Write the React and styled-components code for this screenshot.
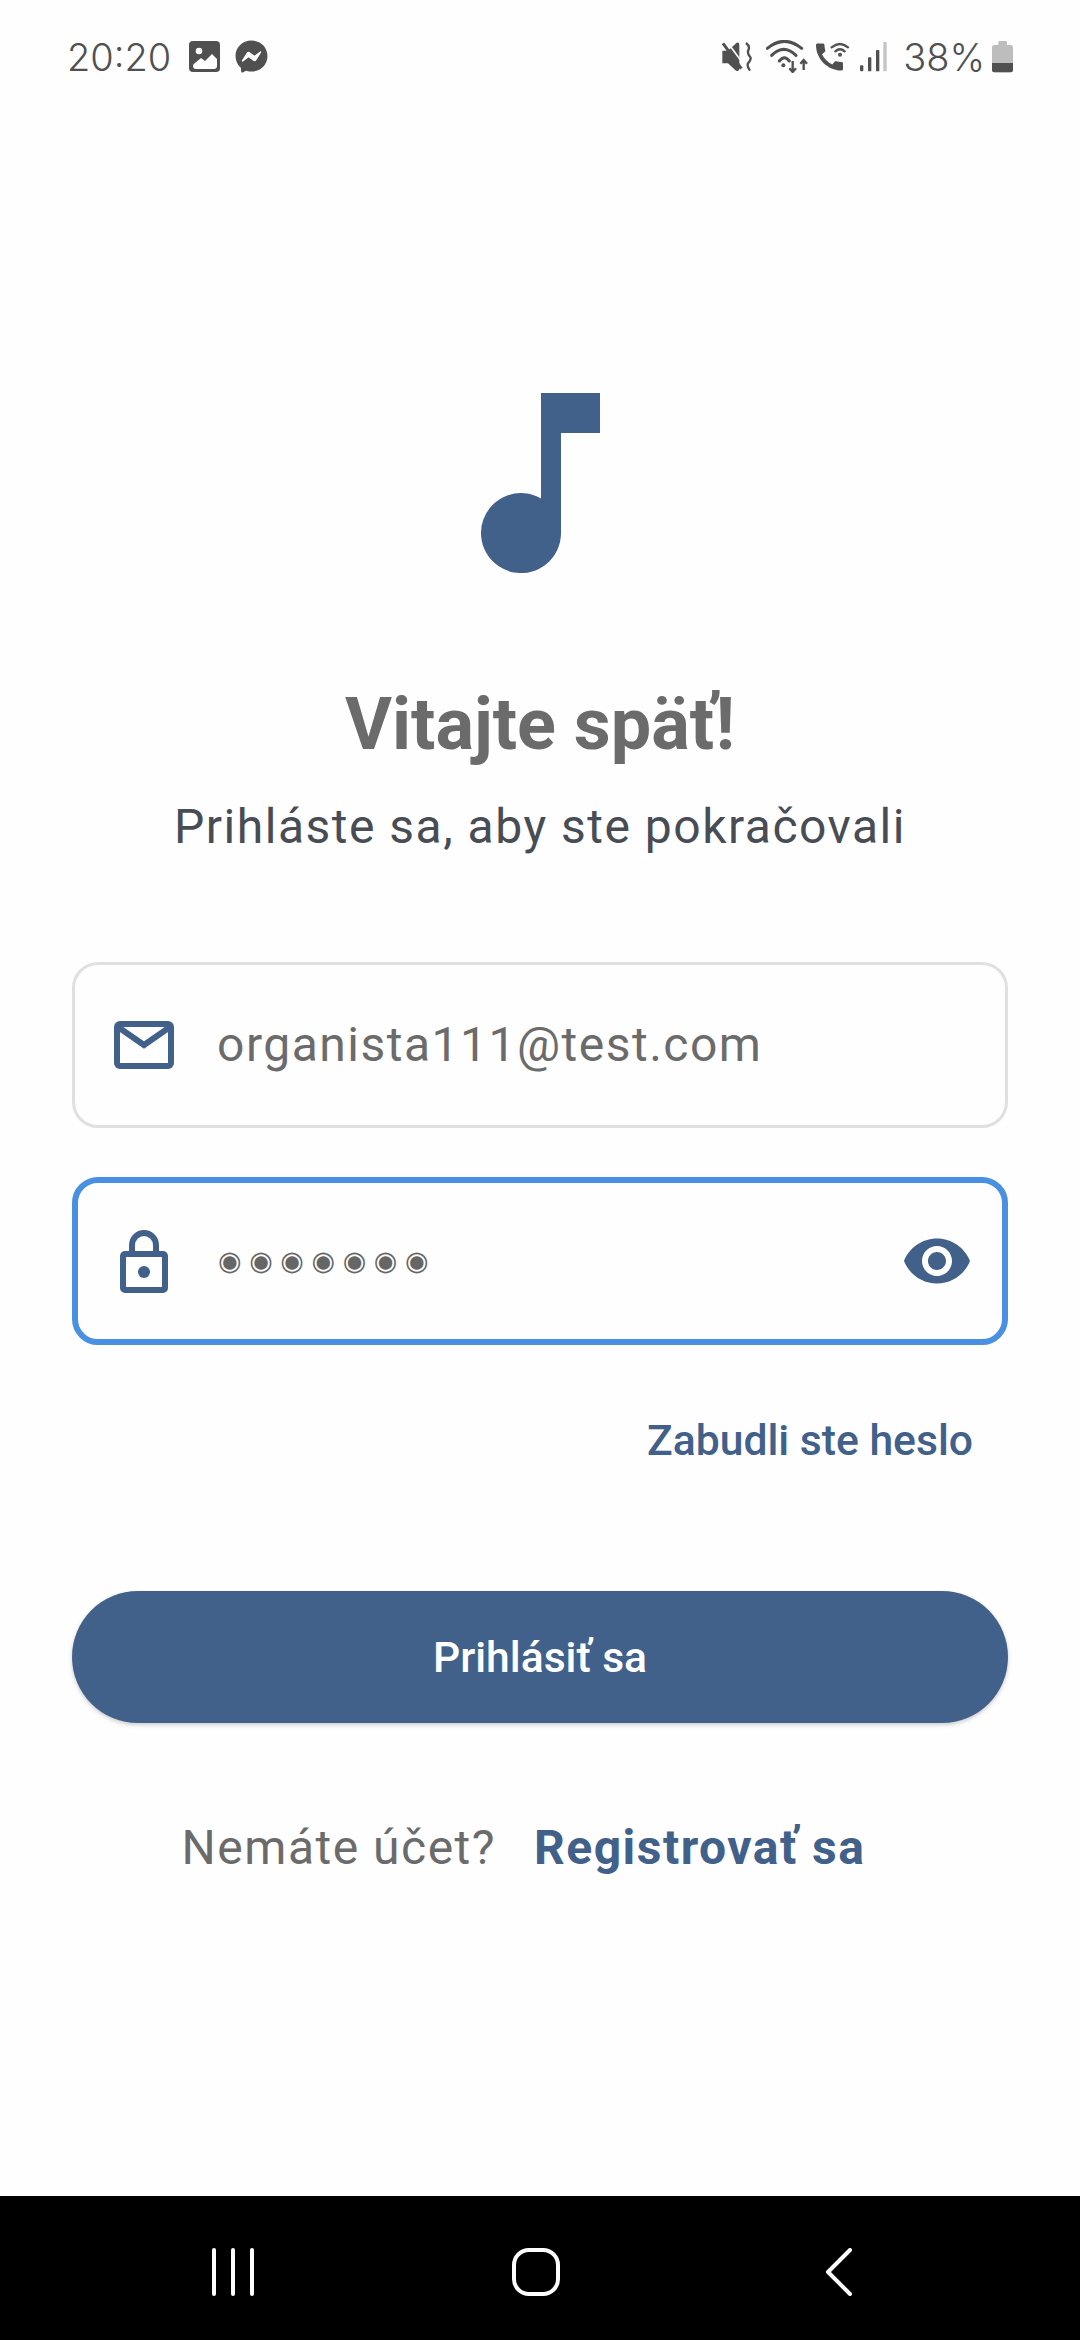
import React from 'react';
import styled, { createGlobalStyle } from 'styled-components';
import { FaFacebookMessenger } from 'react-icons/fa';

const GlobalStyle = createGlobalStyle`
    html, body {
        margin: 0;
        padding: 0;
        background: #fefefe;
    }
    * {
        box-sizing: border-box;
    }
`

const Page = styled.div`
    width: 1080px;
    height: 2340px;
    display: flex;
    flex-direction: column;
    background: #fefefe;
    font-family: Roboto, "Liberation Sans", sans-serif;
    overflow: hidden;
`

const StatusBar = styled.div`
    height: 113px;
    padding: 0 67px 0 67px;
    display: flex;
    align-items: center;
    color: #505050;
    font-family: Inter, Roboto, sans-serif;
    font-weight: 300;
`
const StatusText = styled.span`
    font-size: 38px;
    line-height: 40px;
    margin-left: ${(p) => p.$gap || 0}px;
`
const Spacer = styled.div`
    flex: 1;
`
const StatusIcon = styled.svg`
    display: block;
    flex: none;
    margin-left: ${(p) => p.$gap || 0}px;
`
const MessengerIcon = styled(FaFacebookMessenger)`
    display: block;
    flex: none;
    margin-left: 15px;
    font-size: 33px;
    color: #505050;
`

const Content = styled.main`
    flex: 1;
    padding: 280px 72px 0;
    display: flex;
    flex-direction: column;
    align-items: stretch;
`
const Logo = styled.svg`
    display: block;
    align-self: center;
    margin-left: 2px;
`
const Title = styled.h1`
    margin: 110px 0 0;
    text-align: center;
    font-size: 72px;
    line-height: 84px;
    font-weight: 700;
    color: #6b6b6b;
`
const Subtitle = styled.p`
    margin: 30px 0 0;
    text-align: center;
    font-size: 48px;
    line-height: 60px;
    font-weight: 400;
    letter-spacing: 1.5px;
    color: #474c55;
`
const Field = styled.div`
    height: ${(p) => (p.$focused ? 168 : 166)}px;
    margin-top: ${(p) => p.$top}px;
    padding: 0 ${(p) => (p.$focused ? 29 : 36)}px 0 ${(p) => (p.$focused ? 42 : 39)}px;
    display: flex;
    align-items: center;
    border: ${(p) => (p.$focused ? '6px solid #4a90e2' : '3px solid #e0e0e0')};
    border-radius: 26px;
    background: #fefefe;
`
const FieldIcon = styled.svg`
    display: block;
    flex: none;
    color: #41608a;
`
const FieldValue = styled.span`
    margin-left: ${(p) => p.$gap}px;
    font-size: 48px;
    line-height: 60px;
    letter-spacing: 1.5px;
    color: #6b6b6b;
`
const Dots = styled.span`
    flex: 1;
    margin-left: ${(p) => p.$gap}px;
    font-family: "DejaVu Sans", sans-serif;
    font-size: 27px;
    line-height: 58px;
    letter-spacing: 7.6px;
    color: #666;
`
const ForgotLink = styled.a`
    align-self: flex-end;
    margin: 70px 35px 0 0;
    font-size: 42.67px;
    line-height: 50px;
    font-weight: 500;
    color: #41608a;
`
const LoginButton = styled.button`
    display: block;
    height: 132px;
    margin-top: 126px;
    border: 0;
    border-radius: 66px;
    background: #41608a;
    box-shadow: 0 2px 4px rgba(0, 0, 0, 0.2);
    font-family: inherit;
    font-size: 42.67px;
    font-weight: 500;
    color: #fff;
`
const Footer = styled.div`
    margin-top: 95px;
    padding-right: 33px;
    display: flex;
    justify-content: center;
    align-items: center;
    gap: 38px;
    line-height: 60px;
`
const FooterText = styled.span`
    font-size: 48px;
    letter-spacing: 1.5px;
    color: #6b6b6b;
`
const FooterLink = styled.a`
    font-size: 48px;
    font-weight: 700;
    letter-spacing: 1.5px;
    color: #41608a;
`

const NavBar = styled.nav`
    height: 144px;
    padding: 8px 8px 0 0;
    background: #000;
    display: grid;
    grid-template-columns: repeat(3, 303px);
    justify-content: center;
    justify-items: center;
    align-items: center;
`
const NavIcon = styled.svg`
    display: block;
    fill: none;
    stroke: #fff;
    stroke-width: 4;
    stroke-linecap: round;
    stroke-linejoin: round;
`

function PhotoIcon() {
    return (
        <StatusIcon $gap={18} width="31" height="31" viewBox="0 0 31 31">
            <rect width="31" height="31" rx="4" fill="#505050" />
            <circle cx="10" cy="10" r="3.3" fill="#fff" />
            <path d="M4 25 Q4 23 6 22 L12 17 L16 20 L23 13 L28 18 V25 Q28 28 25 28 H7 Q4 28 4 25 Z" fill="#fff" />
        </StatusIcon>
    );
}

function MuteIcon() {
    return (
        <StatusIcon width="30" height="30" viewBox="0 0 90 90">
            <path d="M1 26 H18 L44 2 Q52 0 52 8 V82 Q50 90 42 86 L18 64 H1 Z" fill="#505050" />
            <path d="M14 -2 L66 68" stroke="#fefefe" strokeWidth="5" />
            <path d="M3 4 L58 80" stroke="#505050" strokeWidth="9" />
            <path d="M72 3 Q84 12 80 22 Q74 32 84 44 Q90 52 78 64 Q74 72 84 86" stroke="#505050" strokeWidth="7" fill="none" />
        </StatusIcon>
    );
}

function WifiIcon() {
    return (
        <StatusIcon $gap={14} width="45" height="33" viewBox="0 0 135 99">
            <g fill="none" stroke="#505050" strokeWidth="9" strokeLinecap="round">
                <path d="M4 25 Q55 -17 107 25" />
                <path d="M17 46 Q53 10 90 46" />
                <path d="M40 63 Q55 43 70 63" />
            </g>
            <circle cx="52" cy="76" r="6" fill="#505050" />
            <g fill="none" stroke="#505050" strokeWidth="7">
                <path d="M80 63 V96 M70 85 L80 96 L90 85" />
                <path d="M113 90 V60 M103 71 L113 60 L123 71" />
            </g>
        </StatusIcon>
    );
}

function CallWifiIcon() {
    return (
        <StatusIcon $gap={5} width="34" height="33" viewBox="0 0 102 99">
            <g transform="translate(-13.5 -3) scale(4.5)">
                <path
                    fill="#505050"
                    d="M20.01 15.38c-1.23 0-2.42-.2-3.53-.56-.35-.12-.74-.03-1.01.24l-1.57 1.97c-2.83-1.35-5.48-3.9-6.89-6.83l1.95-1.66c.27-.28.35-.67.24-1.02-.37-1.11-.56-2.3-.56-3.53 0-.54-.45-.99-.99-.99H4.19C3.65 3 3 3.24 3 3.99 3 13.28 10.73 21 20.01 21c.71 0 .99-.63.99-1.18v-3.45c0-.54-.45-.99-.99-.99z"
                />
            </g>
            <g fill="none" stroke="#505050" strokeWidth="7" strokeLinecap="round">
                <path d="M47 22 Q72 2 96 22" />
                <path d="M58 34 Q72 22 86 34" />
            </g>
            <circle cx="72" cy="44" r="6" fill="#505050" />
        </StatusIcon>
    );
}

function SignalIcon() {
    return (
        <StatusIcon $gap={10} width="27" height="30" viewBox="0 0 81 90">
            <rect x="0" y="70" width="10" height="18" rx="3" fill="#505050" />
            <rect x="24" y="46" width="10" height="42" rx="2" fill="#505050" />
            <rect x="48" y="24" width="10" height="64" rx="2" fill="#505050" />
            <rect x="70" y="0" width="10" height="88" rx="2" fill="#c4c4c4" />
        </StatusIcon>
    );
}

function BatteryIcon() {
    return (
        <StatusIcon $gap={7} width="21" height="32" viewBox="0 0 63 96">
            <rect x="19" y="0" width="26" height="20" rx="4" fill="#bdbdbd" />
            <rect x="0" y="12" width="63" height="82" rx="7" fill="#bdbdbd" />
            <path d="M0 66 H63 V87 Q63 94 56 94 H7 Q0 94 0 87 Z" fill="#505050" />
        </StatusIcon>
    );
}

function App() {
    return (
        <Page>
            <GlobalStyle />
            <StatusBar>
                <StatusText>20:20</StatusText>
                <PhotoIcon />
                <MessengerIcon />
                <Spacer />
                <MuteIcon />
                <WifiIcon />
                <CallWifiIcon />
                <SignalIcon />
                <StatusText $gap={16}>38%</StatusText>
                <BatteryIcon />
            </StatusBar>

            <Content>
                <Logo width="120" height="180" viewBox="0 0 120 180">
                    <path
                        fill="#41608a"
                        d="M60 0 H119 V40 H80 V140 A40 40 0 1 1 60 105.4 Z"
                    />
                </Logo>
                <Title>Vitajte späť!</Title>
                <Subtitle>Prihláste sa, aby ste pokračovali</Subtitle>

                <Field $top={105}>
                    <FieldIcon width="60" height="48" viewBox="0 0 60 48" fill="none" stroke="currentColor" strokeWidth="6">
                        <rect x="3" y="3" width="54" height="42" rx="3" />
                        <path d="M4 6 L30 24 L56 6" />
                    </FieldIcon>
                    <FieldValue $gap={43}>organista111@test.com</FieldValue>
                </Field>

                <Field $focused $top={49}>
                    <FieldIcon width="48" height="63" viewBox="0 0 48 63">
                        <path fill="none" stroke="currentColor" strokeWidth="6" d="M12 22 V15 A12 12 0 0 1 36 15 V22" />
                        <rect x="3" y="24" width="42" height="36" rx="2" fill="none" stroke="currentColor" strokeWidth="6" />
                        <circle cx="24" cy="42" r="6" fill="currentColor" />
                    </FieldIcon>
                    <Dots $gap={50}>◉◉◉◉◉◉◉</Dots>
                    <FieldIcon width="72" height="72" viewBox="0 0 24 24">
                        <path
                            fill="currentColor"
                            d="M12 4.5C7 4.5 2.73 7.61 1 12c1.73 4.39 6 7.5 11 7.5s9.27-3.11 11-7.5c-1.73-4.39-6-7.5-11-7.5zM12 17c-2.76 0-5-2.24-5-5s2.24-5 5-5 5 2.24 5 5-2.24 5-5 5zm0-8c-1.66 0-3 1.34-3 3s1.34 3 3 3 3-1.34 3-3-1.34-3-3-3z"
                        />
                    </FieldIcon>
                </Field>

                <ForgotLink>Zabudli ste heslo</ForgotLink>
                <LoginButton>Prihlásiť sa</LoginButton>

                <Footer>
                    <FooterText>Nemáte účet?</FooterText>
                    <FooterLink>Registrovať sa</FooterLink>
                </Footer>
            </Content>

            <NavBar>
                <NavIcon width="44" height="48" viewBox="0 0 44 48">
                    <path d="M3 2 V46 M22 2 V46 M41 2 V46" />
                </NavIcon>
                <NavIcon width="48" height="48" viewBox="0 0 48 48">
                    <rect x="2" y="2" width="44" height="44" rx="15" />
                </NavIcon>
                <NavIcon width="28" height="48" viewBox="0 0 28 48">
                    <path d="M25 2 L3 24 L25 46" />
                </NavIcon>
            </NavBar>
        </Page>
    );
}

export default App;
